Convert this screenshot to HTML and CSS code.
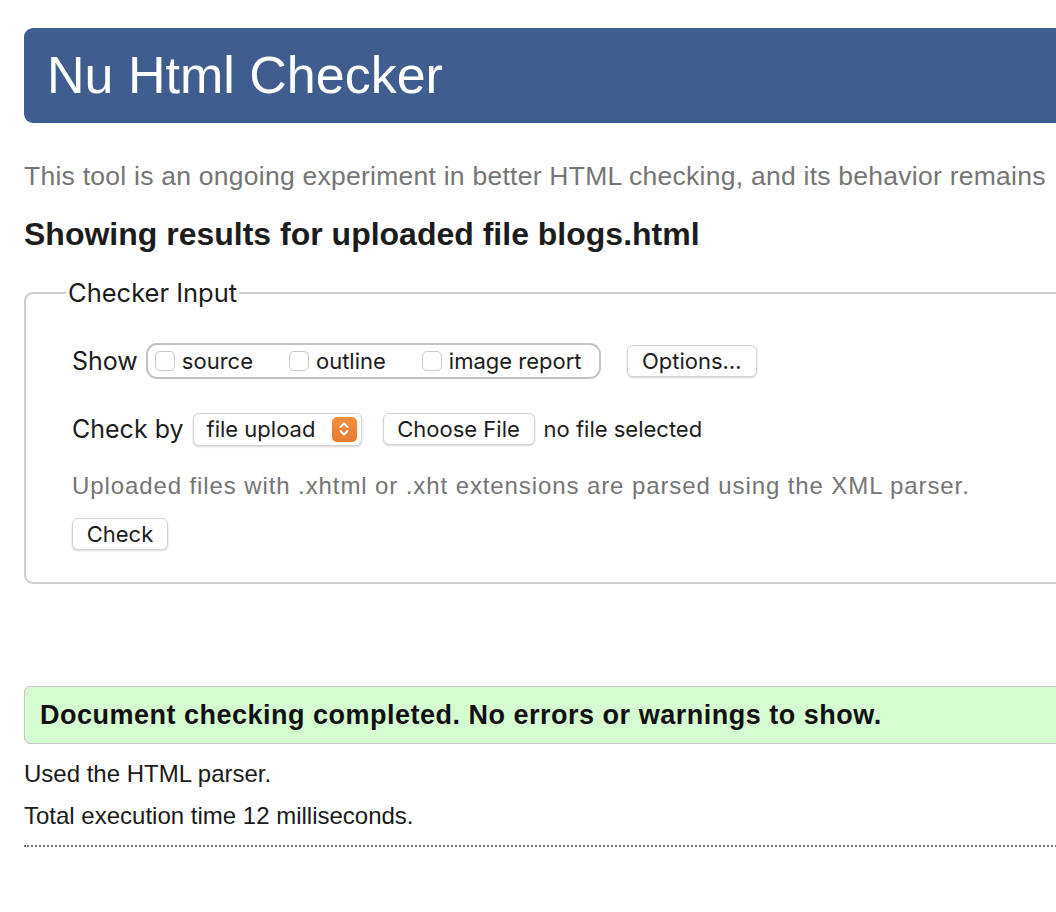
FILE: index.html
```html
<!DOCTYPE html>
<html lang="en">
<head>
<meta charset="utf-8">
<title>Showing results for uploaded file blogs.html - Nu Html Checker</title>
<link rel="stylesheet" href="styles.css">
</head>
<body>
<div class="page">
  <h1 class="banner">Nu Html Checker</h1>
  <p class="intro">This tool is an ongoing experiment in better HTML checking, and its behavior remains</p>
  <h2 class="results-title">Showing results for uploaded file blogs.html</h2>

  <fieldset class="checker">
    <legend class="checker-legend">Checker Input</legend>
    <div class="row row-show">
      <span class="label">Show</span>
      <span class="group">
        <label class="opt"><span class="box"></span><span>source</span></label>
        <label class="opt"><span class="box"></span><span>outline</span></label>
        <label class="opt"><span class="box"></span><span>image report</span></label>
      </span>
      <button class="btn btn-options" type="button">Options…</button>
    </div>
    <div class="row row-check">
      <span class="label">Check by</span>
      <span class="select">
        <span class="select-text">file upload</span>
        <span class="stepper">
          <svg width="14" height="18" viewBox="0 0 14 18"><path d="M3.5 7 L7 3.5 L10.5 7 M3.5 11 L7 14.5 L10.5 11" fill="none" stroke="#fff" stroke-width="2" stroke-linecap="round" stroke-linejoin="round"/></svg>
        </span>
      </span>
      <button class="btn btn-file" type="button">Choose File</button>
      <span class="nofile">no file selected</span>
    </div>
    <p class="hint">Uploaded files with .xhtml or .xht extensions are parsed using the XML parser.</p>
    <button class="btn btn-check" type="button">Check</button>
  </fieldset>

  <div class="success">Document checking completed. No errors or warnings to show.</div>
  <p class="meta meta-first">Used the HTML parser.</p>
  <p class="meta">Total execution time 12 milliseconds.</p>
  <hr class="dotted">
</div>
</body>
</html>
```

FILE: styles.css
```css
html {
  overflow: hidden;
  background: #fff;
}
body {
  margin: 0;
  font-family: "Liberation Sans", Arial, sans-serif;
  color: #1a1a1a;
}
.page {
  width: 1300px;
  padding: 28px 0 0 24px;
}
.banner {
  margin: 0;
  height: 95px;
  line-height: 95px;
  padding-left: 23px;
  background: #3f5e8f;
  color: #fff;
  font-weight: normal;
  font-size: 52px;
  border-radius: 9px 0 0 9px;
}
.intro {
  margin: 38px 0 0;
  font-size: 26.5px;
  letter-spacing: 0.25px;
  line-height: 30px;
  color: #757575;
  white-space: nowrap;
}
.results-title {
  margin: 24px 0 0;
  font-size: 32px;
  line-height: 38px;
  color: #1c1c1c;
}
.checker {
  margin: 26px 0 0;
  border: 2px solid #cdcdcd;
  border-radius: 9px;
  padding: 0 0 32px 46px;
  min-width: 0;
}
.checker-legend {
  margin-left: -6px;
  padding: 0 2px;
  font-family: Inter, "Liberation Sans", sans-serif;
  font-size: 25.5px;
  line-height: 28px;
  color: #1c1c1c;
}
.row {
  display: flex;
  align-items: center;
}
.row-show {
  margin-top: 35px;
  height: 38px;
}
.label {
  font-family: Inter, "Liberation Sans", sans-serif;
  font-size: 25px;
  color: #1c1c1c;
}
.group {
  display: inline-flex;
  align-items: center;
  margin-left: 8px;
  width: 455px;
  height: 36px;
  padding: 0 0 0 7px;
  border: 2px solid #c4c4c4;
  border-radius: 11px;
  box-sizing: border-box;
}
.opt {
  display: inline-flex;
  align-items: center;
  gap: 7px;
  font-family: Inter, "Liberation Sans", sans-serif;
  font-size: 22px;
  color: #1c1c1c;
}
.opt + .opt {
  margin-left: 36px;
}
.box {
  width: 20px;
  height: 20px;
  box-sizing: border-box;
  border: 1px solid #c8c8c8;
  border-radius: 5px;
  background: #fff;
}
.btn {
  font-family: Inter, "Liberation Sans", sans-serif;
  font-size: 22px;
  color: #1c1c1c;
  background: #fff;
  border: 1px solid #d4d4d4;
  border-radius: 6px;
  box-shadow: 0 1px 2px rgba(0, 0, 0, 0.18);
  padding: 0;
  height: 32px;
  line-height: 30px;
}
.btn-options {
  margin-left: 26px;
  width: 130px;
}
.row-check {
  margin-top: 32px;
  height: 34px;
}
.select {
  display: inline-flex;
  align-items: center;
  justify-content: space-between;
  margin-left: 9px;
  width: 169px;
  height: 33px;
  box-sizing: border-box;
  padding: 0 4px 0 13px;
  background: #fff;
  border: 1px solid #d4d4d4;
  border-radius: 6px;
  box-shadow: 0 1px 2px rgba(0, 0, 0, 0.18);
  font-family: Inter, "Liberation Sans", sans-serif;
  font-size: 22px;
  color: #1c1c1c;
}
.stepper {
  display: flex;
  align-items: center;
  justify-content: center;
  width: 25px;
  height: 25px;
  border-radius: 5px;
  background: linear-gradient(#f3923f, #e77a2a);
}
.btn-file {
  margin-left: 21px;
  width: 152px;
}
.nofile {
  margin-left: 9px;
  font-family: Inter, "Liberation Sans", sans-serif;
  font-size: 22px;
  color: #1c1c1c;
}
.hint {
  margin: 25px 0 0;
  font-size: 24px;
  letter-spacing: 0.9px;
  line-height: 29px;
  color: #757575;
}
.btn-check {
  display: block;
  margin-top: 18px;
  width: 96px;
}
.success {
  margin-top: 102px;
  height: 58px;
  box-sizing: border-box;
  padding-left: 15px;
  line-height: 56px;
  border: 1px solid #c6c6c6;
  border-radius: 6px;
  background: #d5fbd0;
  font-weight: bold;
  font-size: 27px;
  letter-spacing: 0.5px;
  color: #111;
}
.meta {
  margin: 15px 0 0;
  font-size: 24px;
  line-height: 29px;
  color: #1a1a1a;
}
.meta-first {
  margin-top: 15px;
}
.meta + .meta {
  margin-top: 13px;
}
.dotted {
  margin: 15px 0 0;
  border: 0;
  border-top: 2px dotted #777;
  height: 0;
}
```
